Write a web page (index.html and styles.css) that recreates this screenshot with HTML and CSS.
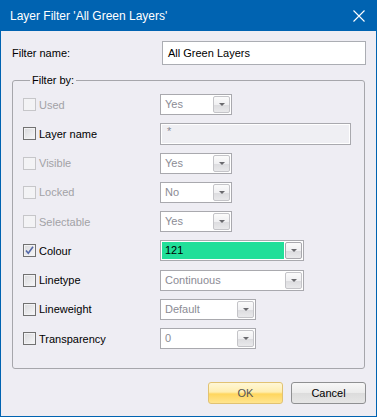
FILE: index.html
```html
<!DOCTYPE html>
<html lang="en">
<head>
  <meta charset="UTF-8" />
  <title>Layer Filter</title>
  <link rel="stylesheet" href="styles.css">
</head>
<body>

<div class="dialog">
  <div class="titlebar">
    <span class="title">Layer Filter 'All Green Layers'</span>
    <svg class="close" width="12" height="12" viewBox="0 0 12 12">
      <path d="M0.5 0.5 L11.5 11.5 M11.5 0.5 L0.5 11.5" stroke="#fff" stroke-width="1.1" fill="none" />
    </svg>
  </div>

  <div class="content">
    <div class="name-row">
      <span class="name-label">Filter name:</span>
      <div class="name-input">All Green Layers</div>
    </div>

    <fieldset class="filter-box">
      <legend>Filter by:</legend>

      <div class="row disabled">
        <div class="opt"><span class="check"></span><span class="lbl">Used</span></div>
        <div class="combo small"><span class="value">Yes</span><span class="drop"></span></div>
      </div>

      <div class="row">
        <div class="opt"><span class="check"></span><span class="lbl">Layer name</span></div>
        <div class="textbox">*</div>
      </div>

      <div class="row disabled">
        <div class="opt"><span class="check"></span><span class="lbl">Visible</span></div>
        <div class="combo small"><span class="value">Yes</span><span class="drop"></span></div>
      </div>

      <div class="row disabled">
        <div class="opt"><span class="check"></span><span class="lbl">Locked</span></div>
        <div class="combo small"><span class="value">No</span><span class="drop"></span></div>
      </div>

      <div class="row disabled">
        <div class="opt"><span class="check"></span><span class="lbl">Selectable</span></div>
        <div class="combo small"><span class="value">Yes</span><span class="drop"></span></div>
      </div>

      <div class="row">
        <div class="opt">
          <span class="check">
            <svg width="11" height="11" viewBox="0 0 11 11">
              <path d="M2 5.5 L4.3 8.3 L9 1.8" stroke="#5468a8" stroke-width="1.6" fill="none" />
            </svg>
          </span>
          <span class="lbl">Colour</span>
        </div>
        <div class="combo wide colour"><span class="value">121</span><span class="drop"></span></div>
      </div>

      <div class="row">
        <div class="opt"><span class="check"></span><span class="lbl">Linetype</span></div>
        <div class="combo wide"><span class="value">Continuous</span><span class="drop"></span></div>
      </div>

      <div class="row">
        <div class="opt"><span class="check"></span><span class="lbl">Lineweight</span></div>
        <div class="combo mid"><span class="value">Default</span><span class="drop"></span></div>
      </div>

      <div class="row">
        <div class="opt"><span class="check"></span><span class="lbl">Transparency</span></div>
        <div class="combo mid"><span class="value">0</span><span class="drop"></span></div>
      </div>
    </fieldset>

    <div class="buttons">
      <button class="btn btn-ok">OK</button>
      <button class="btn">Cancel</button>
    </div>
  </div>
</div>

</body>
</html>
```

FILE: styles.css
```css
body {
  margin: 0;
  font-family: "Liberation Sans", Arial, sans-serif;
  font-size: 11px;
  background: #eeedf3;
}

.dialog {
  width: 377px;
  height: 417px;
  box-sizing: border-box;
  border: 1px solid #0063b1;
  border-top: none;
  background: #eeedf3;
}

.titlebar {
  height: 31px;
  background: #0063b1;
  display: flex;
  align-items: center;
  justify-content: space-between;
  padding: 0 11px 0 9px;
}

.title {
  color: #fff;
  font-size: 12px;
}

.content {
  padding: 10px 10px 0 11px;
}

.name-row {
  display: flex;
  align-items: center;
  justify-content: space-between;
}

.name-input {
  width: 204px;
  height: 24px;
  box-sizing: border-box;
  border: 1px solid #abadb3;
  background: #fff;
  padding-left: 5px;
  line-height: 22px;
  color: #000;
}

.filter-box {
  margin: 9px 1px 0 0;
  padding: 7px 0 18px 10px;
  border: 1px solid #a6a6ab;
  border-radius: 3px;
}

.filter-box legend {
  padding: 0 2px;
  margin-left: 7px;
  line-height: 13px;
}

.row {
  display: grid;
  grid-template-columns: 137px auto;
  align-items: start;
  height: 22px;
  margin-bottom: 7.25px;
}

.row:last-child {
  margin-bottom: 0;
}

.opt {
  display: flex;
  align-items: center;
  gap: 3px;
  height: 21px;
}

.check {
  width: 13px;
  height: 13px;
  box-sizing: border-box;
  border: 1px solid #717171;
  background: linear-gradient(135deg, #d9d9dc, #f7f7f8);
  box-shadow: inset 0 0 0 1px #f2f2f4;
  display: flex;
  align-items: center;
  justify-content: center;
}

.lbl {
  color: #000;
}

.disabled .check {
  border-color: #c6c6c9;
  background: #f3f3f5;
  box-shadow: none;
}

.disabled .lbl {
  color: #a2a2a6;
}

.combo {
  height: 21px;
  box-sizing: border-box;
  border: 1px solid #a9a9ae;
  background: #fff;
  padding: 1px;
  display: flex;
}

.combo.small {
  width: 72px;
}

.combo.wide {
  width: 144px;
}

.combo.mid {
  width: 96px;
}

.combo .value {
  flex: 1;
  padding-left: 3px;
  line-height: 17px;
  color: #8b8b94;
}

.combo.colour .value {
  background: #21df99;
  color: #000;
  margin-right: 1px;
}

.drop {
  width: 17px;
  box-sizing: border-box;
  border: 1px solid #c4c4c8;
  border-radius: 2px;
  background: linear-gradient(#fbfbfb, #f0f0f2 50%, #dcdcdf 52%, #e9e9eb);
  display: flex;
  align-items: center;
  justify-content: center;
}

.colour .drop {
  border-color: #a8a8ad;
}

.drop::after {
  content: "";
  width: 0;
  height: 0;
  border-left: 3px solid transparent;
  border-right: 3px solid transparent;
  border-top: 3px solid #6a6a6e;
}

.textbox {
  width: 191px;
  height: 22px;
  box-sizing: border-box;
  border: 1px solid #a9a9ae;
  box-shadow: inset 0 0 0 1px #fff;
  background: #efeff3;
  padding: 2px 0 0 6px;
  color: #8b8b94;
  line-height: 11px;
}

.buttons {
  display: flex;
  justify-content: flex-end;
  gap: 8px;
  margin-top: 13px;
}

.btn {
  width: 75px;
  height: 22px;
  font-family: "Liberation Sans", Arial, sans-serif;
  font-size: 11px;
  border: 1px solid #8f9092;
  border-radius: 3px;
  background: linear-gradient(#f7f7f7, #ebebeb 50%, #dcdcdc 52%, #e6e6e6);
  color: #000;
  padding: 0;
}

.btn-ok {
  border-color: #e1c272;
  background: linear-gradient(#fff7d6, #ffeeb0 45%, #ffd65e 55%, #ffe58f);
  color: #555;
}
```
